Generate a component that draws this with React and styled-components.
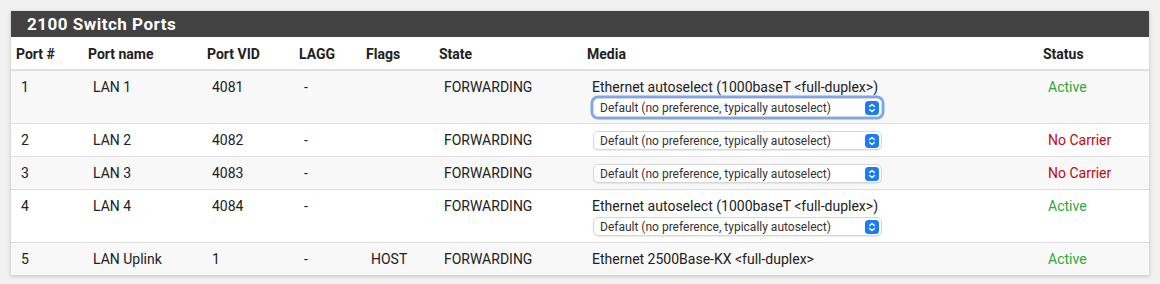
import React from 'react';
import styled, { createGlobalStyle } from 'styled-components';

const GlobalStyle = createGlobalStyle`
  body {
    margin: 0;
    background: #f1f1f1;
    font-family: Roboto, "Liberation Sans", sans-serif;
    color: #212121;
  }
`;

const ports = [
  { num: '1', name: 'LAN 1', vid: '4081', lagg: '-', flags: '', state: 'FORWARDING', media: 'Ethernet autoselect (1000baseT <full-duplex>)', select: true, focused: true, status: 'Active' },
  { num: '2', name: 'LAN 2', vid: '4082', lagg: '-', flags: '', state: 'FORWARDING', media: '', select: true, status: 'No Carrier' },
  { num: '3', name: 'LAN 3', vid: '4083', lagg: '-', flags: '', state: 'FORWARDING', media: '', select: true, status: 'No Carrier' },
  { num: '4', name: 'LAN 4', vid: '4084', lagg: '-', flags: '', state: 'FORWARDING', media: 'Ethernet autoselect (1000baseT <full-duplex>)', select: true, status: 'Active' },
  { num: '5', name: 'LAN Uplink', vid: '1', lagg: '-', flags: 'HOST', state: 'FORWARDING', media: 'Ethernet 2500Base-KX <full-duplex>', select: false, status: 'Active' },
];

const widths = [72, 119, 92, 67, 73, 148, 456, 111];
const headers = ['Port #', 'Port name', 'Port VID', 'LAGG', 'Flags', 'State', 'Media', 'Status'];

function SwitchPorts() {
  return (
    <Page>
      <Panel>
        <PanelHeading>2100 Switch Ports</PanelHeading>
        <Table>
          <colgroup>
            {widths.map((w, i) => <col key={i} style={{ width: w }} />)}
          </colgroup>
          <thead>
            <tr>
              {headers.map(h => <Th key={h}>{h}</Th>)}
            </tr>
          </thead>
          <tbody>
            {ports.map((p, i) => (
              <Row key={p.num} $striped={i % 2 === 0}>
                <Td>{p.num}</Td>
                <Td>{p.name}</Td>
                <Td>{p.vid}</Td>
                <Td>{p.lagg}</Td>
                <Td>{p.flags}</Td>
                <Td>{p.state}</Td>
                <Td>
                  {p.media && <div>{p.media}</div>}
                  {p.select && <MediaSelect focused={p.focused} />}
                </Td>
                <Td>
                  <Status $ok={p.status === 'Active'}>{p.status}</Status>
                </Td>
              </Row>
            ))}
          </tbody>
        </Table>
      </Panel>
    </Page>
  );
}

// fake macOS style popup select
const MediaSelect = ({ focused }) => (
  <SelectBox $focused={focused}>
    <span>Default (no preference, typically autoselect)</span>
    <svg width="14" height="14" viewBox="0 0 14 14">
      <rect x="0" y="0" width="14" height="14" rx="3.5" fill="#1c7cf4" />
      <path d="M4.6 5.6 L7 3.4 L9.4 5.6" stroke="#fff" strokeWidth="1.4" fill="none" strokeLinecap="round" strokeLinejoin="round" />
      <path d="M4.6 8.4 L7 10.6 L9.4 8.4" stroke="#fff" strokeWidth="1.4" fill="none" strokeLinecap="round" strokeLinejoin="round" />
    </svg>
  </SelectBox>
);

const Page = styled.div`
  padding: 11px;
`;

const Panel = styled.div`
  background: #fff;
  box-shadow: 0 1px 4px rgba(0, 0, 0, 0.22);
`;

const PanelHeading = styled.div`
  background: #424242;
  color: #fff;
  font-weight: bold;
  font-size: 17px;
  line-height: 26px;
  padding: 0 16px;
  letter-spacing: 0.5px;
`;

const Table = styled.table`
  width: 100%;
  border-collapse: collapse;
  table-layout: fixed;
  font-size: 14px;
`;

const Th = styled.th`
  text-align: left;
  font-weight: bold;
  padding: 7px 5px 5px;
  line-height: 20px;
  border-bottom: 2px solid #dedede;
  background: #fff;
`;

const Row = styled.tr`
  background: ${p => (p.$striped ? '#f8f8f8' : '#fff')};
`;

const Td = styled.td`
  vertical-align: top;
  padding: 6px 9px 6px 10px;
  line-height: 20px;
  border-top: 1px solid #dedede;
`;

const Status = styled.span`
  color: ${p => (p.$ok ? '#2ea836' : '#c1090d')};
`;

const SelectBox = styled.div`
  box-sizing: border-box;
  width: 289px;
  height: 19px;
  margin: 1px 0 0 1px;
  display: flex;
  align-items: center;
  justify-content: space-between;
  padding: 0 2px 0 6px;
  background: #fff;
  border-radius: 5px;
  border: 1px solid #d6d6d6;
  box-shadow: ${p => (p.$focused ? '0 0 0 2.5px #7ba6f2' : '0 1px 1px rgba(0,0,0,0.08)')};
  font-size: 12px;
  line-height: 16px;
  color: #333;
`;

export default function App() {
  return (
    <>
      <GlobalStyle />
      <SwitchPorts />
    </>
  );
}
